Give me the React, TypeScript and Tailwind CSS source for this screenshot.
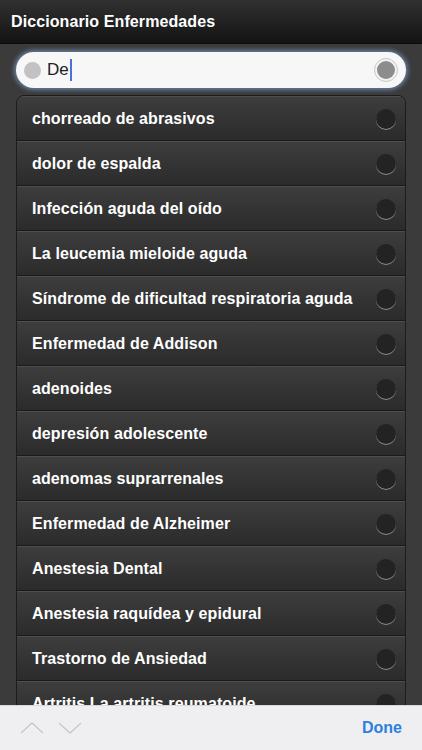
import React from "react";

const items = [
  "chorreado de abrasivos",
  "dolor de espalda",
  "Infección aguda del oído",
  "La leucemia mieloide aguda",
  "Síndrome de dificultad respiratoria aguda",
  "Enfermedad de Addison",
  "adenoides",
  "depresión adolescente",
  "adenomas suprarrenales",
  "Enfermedad de Alzheimer",
  "Anestesia Dental",
  "Anestesia raquídea y epidural",
  "Trastorno de Ansiedad",
  "Artritis La artritis reumatoide",
];

export default function App() {
  return (
    <div
      className="relative w-[422px] h-[750px] overflow-hidden bg-[#3b3b3b]"
      style={{ fontFamily: '"Liberation Sans", Arial, sans-serif' }}
    >
      <div className="h-[44px] flex items-center px-[11px] bg-gradient-to-b from-[#313131] to-[#131313] border-b border-[#0c0c0c]">
        <span className="text-white font-bold text-[16px] tracking-[0.1px]">Diccionario Enfermedades</span>
      </div>
      <div className="px-[16px] pt-[8px]">
        <div className="h-[36px] rounded-full bg-[#f7f7f7] flex items-center pl-[8px] pr-[8px] shadow-[0_0_4px_2px_rgba(120,150,190,0.75)]">
          <div className="w-[17px] h-[17px] rounded-full bg-[#c2c2c2]" />
          <span className="ml-[6px] text-[17px] text-[#222]">De</span>
          <span className="w-[2px] h-[22px] bg-[#4a72d8] ml-[1px]" />
          <div className="flex-1" />
          <div className="w-[24px] h-[24px] rounded-full border border-[#c8c8c8] bg-[#f3f3f3] flex items-center justify-center">
            <div className="w-[18px] h-[18px] rounded-full bg-[#8c8c8c]" />
          </div>
        </div>
      </div>
      <div className="mx-[16px] mt-[7px] rounded-t-[8px] border border-[#1c1c1c] overflow-hidden">
        {items.map((t, i) => (
          <div
            key={i}
            className="h-[45px] flex items-center pl-[15px] pr-[9px] bg-gradient-to-b from-[#3d3d3d] to-[#2b2b2b] border-t border-[#4e4e4e] border-b border-b-[#1a1a1a]"
          >
            <span className="flex-1 text-white font-bold text-[16px] tracking-[0.1px] whitespace-nowrap">{t}</span>
            <div className="w-[20px] h-[20px] rounded-full bg-[#232323] shadow-[0_1px_0_#8a8a8a]" />
          </div>
        ))}
      </div>
      <div className="absolute left-0 right-0 bottom-0 h-[45px] bg-[#efeff1] border-t border-[#d8d8da] flex items-center px-[20px]">
        <svg width="24" height="14" viewBox="0 0 24 14" className="mr-[14px]">
          <path d="M1 12 L12 2 L23 12" fill="none" stroke="#c8c8cc" strokeWidth="1.3" />
        </svg>
        <svg width="24" height="14" viewBox="0 0 24 14">
          <path d="M1 2 L12 12 L23 2" fill="none" stroke="#c8c8cc" strokeWidth="1.3" />
        </svg>
        <div className="flex-1" />
        <span className="text-[#2a7fe0] font-bold text-[16px]">Done</span>
      </div>
    </div>
  );
}
